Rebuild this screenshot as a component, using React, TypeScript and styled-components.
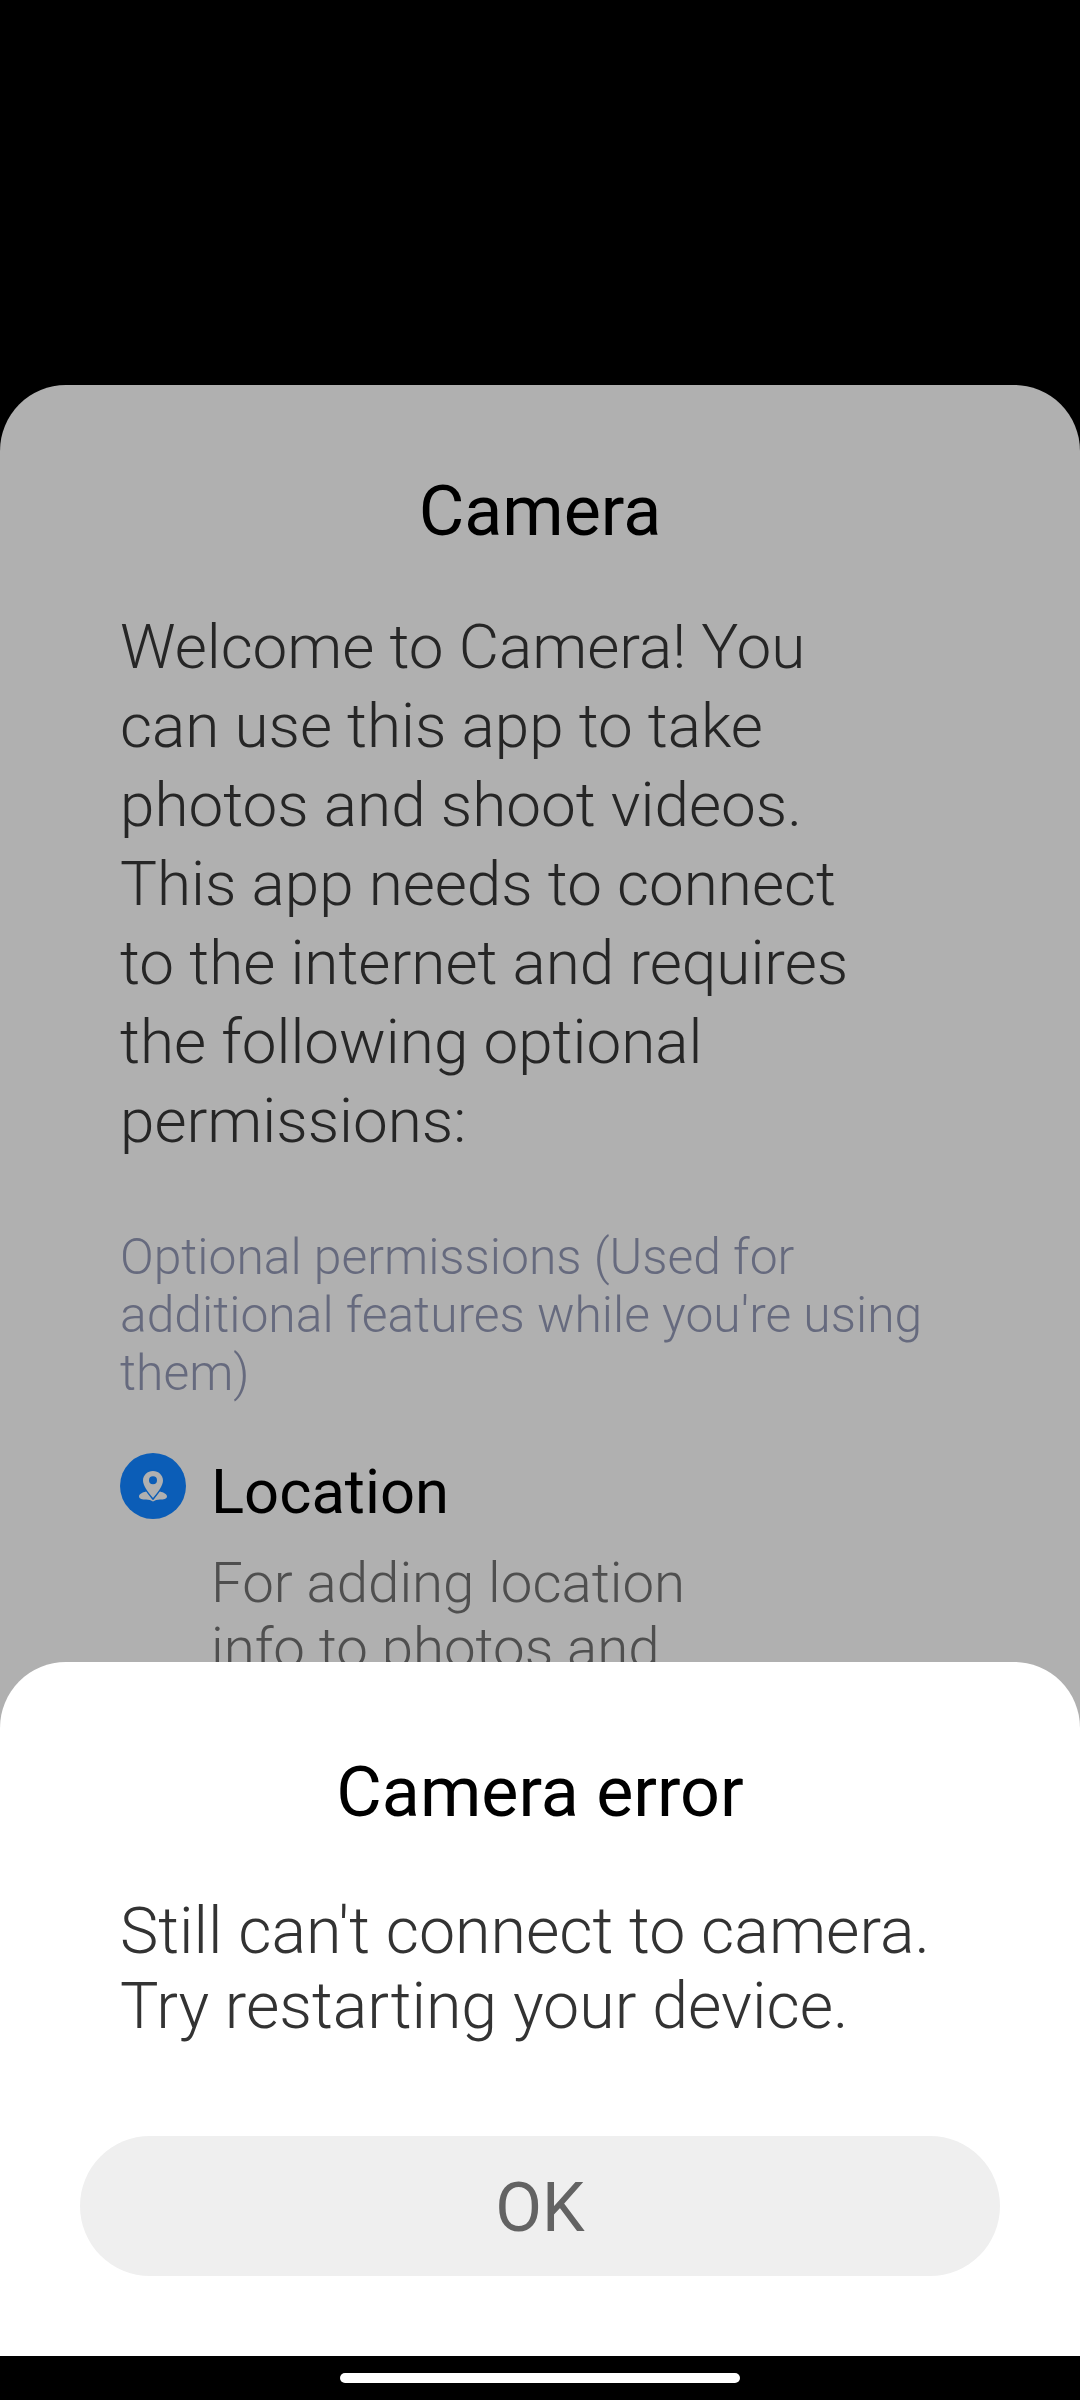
import React from 'react';
import styled, { createGlobalStyle } from 'styled-components';

const GlobalStyle = createGlobalStyle`
  html, body {
    margin: 0;
    padding: 0;
    background: #000;
    font-family: Roboto, 'Liberation Sans', sans-serif;
  }
`;

const Screen = styled.div`
  position: relative;
  width: 1080px;
  height: 2400px;
  display: flex;
  flex-direction: column;
  overflow: hidden;
  background: #000;
  padding-top: 385px;
  box-sizing: border-box;
`;

const ConsentSheet = styled.section`
  flex: 1;
  min-height: 0;
  overflow: hidden;
  background: #b0b0b0;
  border-radius: 66px 66px 0 0;
  padding: 88px 120px 0;
`;

const SheetTitle = styled.h1`
  margin: 0;
  font-size: 70px;
  line-height: 76px;
  font-weight: 400;
  color: #000;
  text-align: center;
`;

const Intro = styled.p`
  margin: 58px 0 0;
  width: 760px;
  font-size: 62px;
  line-height: 79px;
  font-weight: 300;
  color: #262626;
`;

const GroupLabel = styled.p`
  margin: 68px 0 0;
  font-size: 49.8px;
  line-height: 58px;
  font-weight: 300;
  color: #666a7e;
`;

const Permission = styled.div`
  display: flex;
  gap: 25px;
  margin-top: 51px;
`;

const PermissionIcon = styled.div`
  flex: none;
  width: 66px;
  height: 66px;
  border-radius: 50%;
  background: #0b5db7;
  display: flex;
  align-items: center;
  justify-content: center;
`;

const PermissionBody = styled.div`
  width: 540px;
  padding-top: 4px;
`;

const PermissionName = styled.div`
  font-size: 61.5px;
  line-height: 70px;
  font-weight: 400;
  color: #000;
`;

const PermissionText = styled.p`
  margin: 24px 0 0;
  font-size: 56.4px;
  line-height: 65px;
  font-weight: 300;
  color: #4f4f4f;
`;

const ErrorDialog = styled.section`
  position: absolute;
  left: 0;
  right: 0;
  bottom: 44px;
  height: 694px;
  box-sizing: border-box;
  background: #fff;
  border-radius: 66px 66px 0 0;
  padding: 92px 80px 0;
  display: flex;
  flex-direction: column;
`;

const DialogTitle = styled.h2`
  margin: 0;
  font-size: 70px;
  line-height: 76px;
  font-weight: 400;
  color: #000;
  text-align: center;
`;

const DialogText = styled.p`
  margin: 64px 40px 0;
  font-size: 64.5px;
  line-height: 75px;
  font-weight: 300;
  color: #333;
`;

const OkButton = styled.button`
  margin-top: 92px;
  height: 140px;
  border: 0;
  padding: 4px 0 0;
  border-radius: 70px;
  background: #efefef;
  color: #636363;
  font-family: inherit;
  font-size: 68px;
  font-weight: 400;
`;

const NavBar = styled.div`
  flex: none;
  height: 44px;
  display: flex;
  justify-content: center;
  padding-top: 17px;
  box-sizing: border-box;
`;

const HomePill = styled.div`
  width: 400px;
  height: 10px;
  border-radius: 5px;
  background: #fff;
`;

const LocationGlyph = () => (
  <svg width="34" height="34" viewBox="0 0 34 34" fill="#b0b0b0">
    <path d="M3 27.500C3 25 6.500 23.500 10 22.500L24 22.500C27.500 23.500 31 25 31 27.500C31 30 27.500 30.500 24 30.500C21 30.500 19 31.300 17 32.500C15 31.300 13 30.500 10 30.500C6.500 30.500 3 30 3 27.500z" />
    <path
      fillRule="evenodd"
      stroke="#0b5db7"
      strokeWidth="3"
      paintOrder="stroke"
      d="M17 2C11.500 2 7 6.200 7 11.500C7 16.500 12 23 17 29C22 23 27 16.500 27 11.500C27 6.200 22.500 2 17 2zM17 7.200a4 4 0 1 1 0 8a4 4 0 0 1 0-8z"
    />
  </svg>
);

const App = () => (
  <>
    <GlobalStyle />
    <Screen>
      <ConsentSheet>
        <SheetTitle>Camera</SheetTitle>
        <Intro>
          Welcome to Camera! You can use this app to take photos and shoot videos. This app
          needs to connect to the internet and requires the following optional permissions:
        </Intro>
        <GroupLabel>Optional permissions (Used for additional features while you're using them)</GroupLabel>
        <Permission>
          <PermissionIcon>
            <LocationGlyph />
          </PermissionIcon>
          <PermissionBody>
            <PermissionName>Location</PermissionName>
            <PermissionText>For adding location info to photos and videos</PermissionText>
          </PermissionBody>
        </Permission>
      </ConsentSheet>
      <ErrorDialog>
        <DialogTitle>Camera error</DialogTitle>
        <DialogText>Still can't connect to camera. Try restarting your device.</DialogText>
        <OkButton>OK</OkButton>
      </ErrorDialog>
      <NavBar>
        <HomePill />
      </NavBar>
    </Screen>
  </>
);

export default App;
